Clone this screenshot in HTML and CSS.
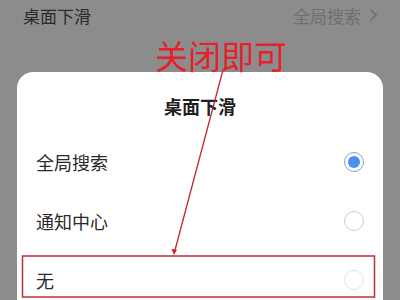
FILE: index.html
```html
<!DOCTYPE html>
<html>
<head>
<meta charset="utf-8">
<link rel="stylesheet" href="styles.css">
</head>
<body>
<div class="topbar">
  <span class="top-title">桌面下滑</span>
  <span class="top-value">全局搜索
    <svg class="chev" width="9" height="14" viewBox="0 0 9 14"><path d="M1.5 1.5 L7 7 L1.5 12.5" fill="none" stroke="#6f6f6f" stroke-width="1.6"/></svg>
  </span>
</div>
<div class="dialog">
  <div class="dlg-title">桌面下滑</div>
  <div class="row">
    <span class="label">全局搜索</span>
    <span class="radio on"><span class="dot"></span></span>
  </div>
  <div class="row">
    <span class="label">通知中心</span>
    <span class="radio"></span>
  </div>
  <div class="row">
    <span class="label">无</span>
    <span class="radio faint"></span>
  </div>
</div>
<div class="note">关闭即可</div>
<svg class="annot" width="400" height="300" viewBox="0 0 400 300">
  <line x1="223" y1="70" x2="174.5" y2="252" stroke="#c4262e" stroke-width="1.3"/>
  <path d="M171.5 249 L174 255 L177 249.5 Z" fill="#c4262e"/>
  <rect x="22.5" y="256" width="352" height="41" fill="none" stroke="#b93239" stroke-width="1.5"/>
</svg>
</body>
</html>
```
FILE: styles.css
```css
html, body {
  margin: 0;
  padding: 0;
}
body {
  width: 400px;
  height: 300px;
  overflow: hidden;
  background: #8c8c8c;
  font-family: "Noto Sans CJK SC", "Noto Sans", sans-serif;
  position: relative;
}
.topbar {
  height: 30px;
  display: flex;
  align-items: center;
  justify-content: space-between;
  padding: 0 22px 0 23px;
}
.top-title {
  font-size: 17px;
  color: #2a2a2a;
}
.top-value {
  font-size: 17px;
  color: #6f6f6f;
  display: flex;
  align-items: center;
  gap: 8px;
}
.dialog {
  margin: 42px 17px 0 17px;
  height: 228px;
  background: #ffffff;
  border-radius: 16px 16px 0 0;
}
.dlg-title {
  height: 52px;
  padding-top: 8px;
  line-height: 52px;
  text-align: center;
  font-size: 18px;
  font-weight: bold;
  color: #1f1f1f;
}
.row {
  height: 59px;
  display: flex;
  align-items: center;
  justify-content: space-between;
  padding: 0 19px;
}
.label {
  font-size: 18px;
  color: #2a2a2a;
}
.radio {
  width: 18px;
  height: 18px;
  border: 1.5px solid #cdcdcd;
  border-radius: 50%;
  display: flex;
  align-items: center;
  justify-content: center;
  box-sizing: content-box;
}
.radio.on {
  border-color: #7ea3d8;
}
.radio.faint {
  border-color: #e2e2e2;
}
.dot {
  width: 12px;
  height: 12px;
  border-radius: 50%;
  background: #4a8ff0;
}
.note {
  position: absolute;
  left: 155px;
  top: 37px;
  font-size: 33px;
  line-height: 36px;
  color: #e4222d;
}
.annot {
  position: absolute;
  left: 0;
  top: 0;
}
```
